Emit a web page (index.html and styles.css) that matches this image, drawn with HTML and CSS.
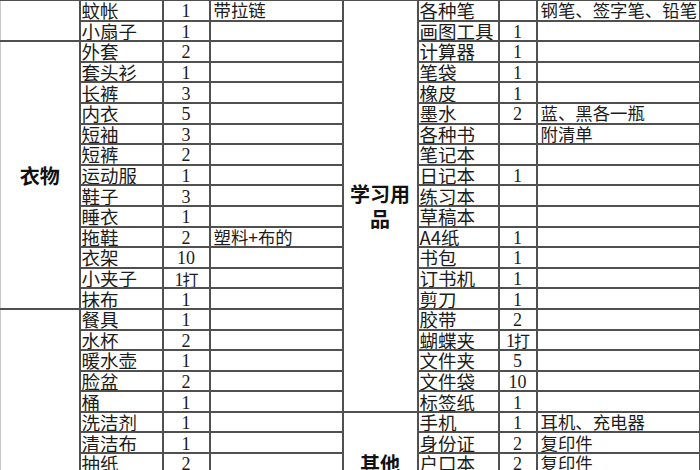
FILE: index.html
```html
<!DOCTYPE html>
<html lang="zh-CN">
<head>
<meta charset="utf-8">
<title>物品清单</title>
<link rel="stylesheet" href="styles.css">
</head>
<body>
<table class="sheet">
  <colgroup>
    <col class="c-cat-l"><col class="c-name-l"><col class="c-qty-l"><col class="c-note-l">
    <col class="c-cat-r"><col class="c-name-r"><col class="c-qty-r"><col class="c-note-r">
  </colgroup>
  <tbody>
    <tr>
      <td class="cat edge" rowspan="2"></td><td class="name">蚊帐</td><td class="qty">1</td><td class="note">带拉链</td>
      <td class="cat" rowspan="20">学习用品</td><td class="name">各种笔</td><td class="qty"></td><td class="note">钢笔、签字笔、铅笔</td>
    </tr>
    <tr>
      <td class="name">小扇子</td><td class="qty">1</td><td class="note"></td>
      <td class="name">画图工具</td><td class="qty">1</td><td class="note"></td>
    </tr>
    <tr>
      <td class="cat edge" rowspan="13">衣物</td><td class="name">外套</td><td class="qty">2</td><td class="note"></td>
      <td class="name">计算器</td><td class="qty">1</td><td class="note"></td>
    </tr>
    <tr>
      <td class="name">套头衫</td><td class="qty">1</td><td class="note"></td>
      <td class="name">笔袋</td><td class="qty">1</td><td class="note"></td>
    </tr>
    <tr>
      <td class="name">长裤</td><td class="qty">3</td><td class="note"></td>
      <td class="name">橡皮</td><td class="qty">1</td><td class="note"></td>
    </tr>
    <tr>
      <td class="name">内衣</td><td class="qty">5</td><td class="note"></td>
      <td class="name">墨水</td><td class="qty">2</td><td class="note">蓝、黑各一瓶</td>
    </tr>
    <tr>
      <td class="name">短袖</td><td class="qty">3</td><td class="note"></td>
      <td class="name">各种书</td><td class="qty"></td><td class="note">附清单</td>
    </tr>
    <tr>
      <td class="name">短裤</td><td class="qty">2</td><td class="note"></td>
      <td class="name">笔记本</td><td class="qty"></td><td class="note"></td>
    </tr>
    <tr>
      <td class="name">运动服</td><td class="qty">1</td><td class="note"></td>
      <td class="name">日记本</td><td class="qty">1</td><td class="note"></td>
    </tr>
    <tr>
      <td class="name">鞋子</td><td class="qty">3</td><td class="note"></td>
      <td class="name">练习本</td><td class="qty"></td><td class="note"></td>
    </tr>
    <tr>
      <td class="name">睡衣</td><td class="qty">1</td><td class="note"></td>
      <td class="name">草稿本</td><td class="qty"></td><td class="note"></td>
    </tr>
    <tr>
      <td class="name">拖鞋</td><td class="qty">2</td><td class="note">塑料+布的</td>
      <td class="name">A4纸</td><td class="qty">1</td><td class="note"></td>
    </tr>
    <tr>
      <td class="name">衣架</td><td class="qty">10</td><td class="note"></td>
      <td class="name">书包</td><td class="qty">1</td><td class="note"></td>
    </tr>
    <tr>
      <td class="name">小夹子</td><td class="qty mixed"><span class="num">1</span>打</td><td class="note"></td>
      <td class="name">订书机</td><td class="qty">1</td><td class="note"></td>
    </tr>
    <tr>
      <td class="name">抹布</td><td class="qty">1</td><td class="note"></td>
      <td class="name">剪刀</td><td class="qty">1</td><td class="note"></td>
    </tr>
    <tr>
      <td class="cat edge" rowspan="21">生活用品</td><td class="name">餐具</td><td class="qty">1</td><td class="note"></td>
      <td class="name">胶带</td><td class="qty">2</td><td class="note"></td>
    </tr>
    <tr>
      <td class="name">水杯</td><td class="qty">2</td><td class="note"></td>
      <td class="name">蝴蝶夹</td><td class="qty mixed"><span class="num">1</span>打</td><td class="note"></td>
    </tr>
    <tr>
      <td class="name">暖水壶</td><td class="qty">1</td><td class="note"></td>
      <td class="name">文件夹</td><td class="qty">5</td><td class="note"></td>
    </tr>
    <tr>
      <td class="name">脸盆</td><td class="qty">2</td><td class="note"></td>
      <td class="name">文件袋</td><td class="qty">10</td><td class="note"></td>
    </tr>
    <tr>
      <td class="name">桶</td><td class="qty">1</td><td class="note"></td>
      <td class="name">标签纸</td><td class="qty">1</td><td class="note"></td>
    </tr>
    <tr>
      <td class="name">洗洁剂</td><td class="qty">1</td><td class="note"></td>
      <td class="cat" rowspan="5">其他</td><td class="name">手机</td><td class="qty">1</td><td class="note">耳机、充电器</td>
    </tr>
    <tr>
      <td class="name">清洁布</td><td class="qty">1</td><td class="note"></td>
      <td class="name">身份证</td><td class="qty">2</td><td class="note">复印件</td>
    </tr>
    <tr>
      <td class="name">抽纸</td><td class="qty">2</td><td class="note"></td>
      <td class="name">户口本</td><td class="qty">2</td><td class="note">复印件</td>
    </tr>
    <tr>
      <td class="name">牙刷</td><td class="qty">1</td><td class="note"></td>
      <td class="name">照片</td><td class="qty">8</td><td class="note">一寸</td>
    </tr>
    <tr>
      <td class="name">牙膏</td><td class="qty">1</td><td class="note"></td>
      <td class="name">银行卡</td><td class="qty">1</td><td class="note"></td>
    </tr>
    <tr>
      <td class="name">毛巾</td><td class="qty">2</td><td class="note"></td>
      <td class="cat" rowspan="11">药品</td><td class="name">感冒药</td><td class="qty">1</td><td class="note"></td>
    </tr>
    <tr>
      <td class="name">洗发水</td><td class="qty">1</td><td class="note"></td>
      <td class="name">创可贴</td><td class="qty">1</td><td class="note"></td>
    </tr>
    <tr>
      <td class="name">沐浴露</td><td class="qty">1</td><td class="note"></td>
      <td class="name">肠胃药</td><td class="qty">1</td><td class="note"></td>
    </tr>
    <tr>
      <td class="name">衣柜锁</td><td class="qty">1</td><td class="note"></td>
      <td class="name">体温计</td><td class="qty">1</td><td class="note"></td>
    </tr>
    <tr>
      <td class="name">台灯</td><td class="qty">1</td><td class="note"></td>
      <td class="name">棉签</td><td class="qty">1</td><td class="note"></td>
    </tr>
    <tr>
      <td class="name">插线板</td><td class="qty">1</td><td class="note"></td>
      <td class="name">口罩</td><td class="qty">1</td><td class="note"></td>
    </tr>
    <tr>
      <td class="name">雨伞</td><td class="qty">1</td><td class="note"></td>
      <td class="name">风油精</td><td class="qty">1</td><td class="note"></td>
    </tr>
    <tr>
      <td class="name">晾衣绳</td><td class="qty">1</td><td class="note"></td>
      <td class="name">晕车药</td><td class="qty">1</td><td class="note"></td>
    </tr>
    <tr>
      <td class="name">收纳箱</td><td class="qty">1</td><td class="note"></td>
      <td class="name">碘伏</td><td class="qty">1</td><td class="note"></td>
    </tr>
    <tr>
      <td class="name">拖把</td><td class="qty">1</td><td class="note"></td>
      <td class="name">纱布</td><td class="qty">1</td><td class="note"></td>
    </tr>
    <tr>
      <td class="name">扫帚</td><td class="qty">1</td><td class="note"></td>
      <td class="name">消炎药</td><td class="qty">1</td><td class="note"></td>
    </tr>
  </tbody>
</table>
</body>
</html>
```

FILE: styles.css
```css
html, body {
  margin: 0;
  padding: 0;
  background: #ffffff;
  overflow: hidden;
}

.sheet {
  border-collapse: collapse;
  table-layout: fixed;
  width: 699px;
  margin-top: -1px;
  font-family: "Noto Sans CJK SC", "Liberation Sans", sans-serif;
  font-size: 18.5px;
  color: #1c1c1c;
}

.c-cat-l { width: 79px; }
.c-name-l { width: 83px; }
.c-qty-l { width: 47px; }
.c-note-l { width: 133px; }
.c-cat-r { width: 75px; }
.c-name-r { width: 81px; }
.c-qty-r { width: 38px; }
.c-note-r { width: 163px; }

.sheet tr {
  height: 20.6px;
}

.sheet td {
  border: 2px solid #505050;
  padding: 0 0 0 1px;
  line-height: 16px;
  white-space: nowrap;
  overflow: hidden;
  vertical-align: middle;
}

.sheet td.cat {
  white-space: normal;
  text-align: center;
  font-weight: 700;
  font-size: 20px;
  line-height: 25px;
  padding: 0 2px;
  color: #111;
}

.sheet td.edge {
  border-left: 1px solid #c8c8c8;
}

.sheet td.qty {
  text-align: center;
  padding: 3px 0 0 0;
  font-family: "Liberation Serif", serif;
  font-size: 18px;
  line-height: 13px;
}

.sheet td.qty.mixed {
  font-family: "Noto Sans CJK SC", sans-serif;
  font-size: 16px;
  letter-spacing: -1px;
}

.sheet td.qty .num {
  font-family: "Liberation Serif", serif;
  font-size: 18px;
}

.sheet td.note {
  padding-left: 3px;
  font-size: 17.4px;
}
```
